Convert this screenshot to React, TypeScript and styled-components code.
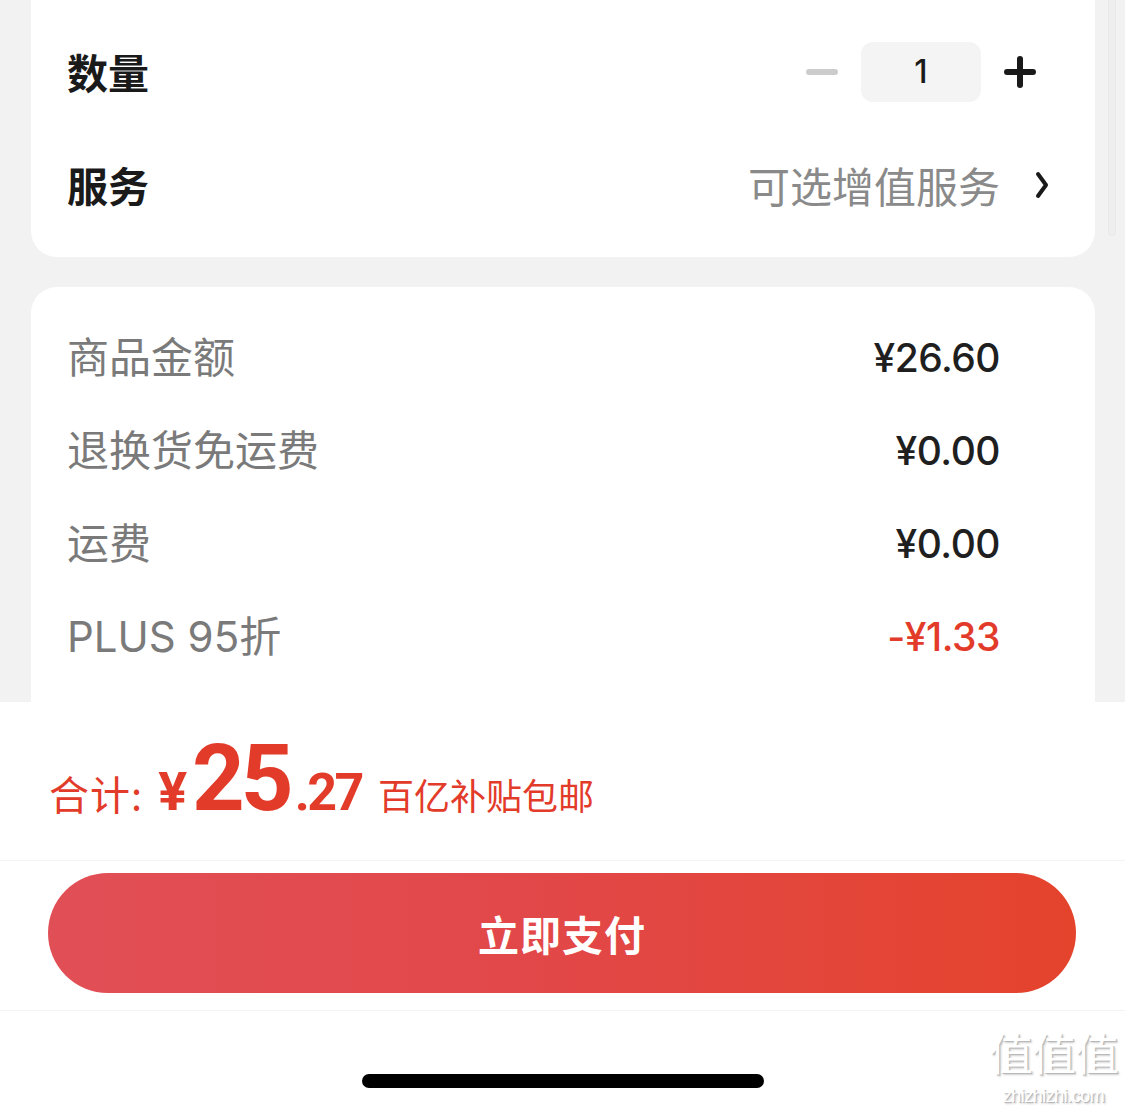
import React from "react";
import styled, { createGlobalStyle } from "styled-components";

const Global = createGlobalStyle`
  html, body { margin: 0; padding: 0; background: #ffffff; }
  body { font-family: Inter, "Noto Sans CJK SC", sans-serif; -webkit-font-smoothing: antialiased; }
  * { box-sizing: border-box; }
`;

const Page = styled.div`
  width: 1125px;
  height: 1114px;
  display: flex;
  flex-direction: column;
  position: relative;
  overflow: hidden;
  background: #ffffff;
`;

const Scroller = styled.div`
  height: 702px;
  flex-shrink: 0;
  background: #f2f2f2;
  overflow: hidden;
  position: relative;
  display: flex;
  flex-direction: column;
  gap: 30px;
  padding: 0 30px 0 31px;
`;

const ScrollThumb = styled.div`
  position: absolute;
  right: 9px;
  top: -10px;
  width: 8px;
  height: 246px;
  border-radius: 4px;
  background: #eeeeee;
  border: 1px solid #e9e9e9;
`;

const Card = styled.div<{ $top?: boolean }>`
  background: #ffffff;
  border-radius: ${(p) => (p.$top ? "0 0 26px 26px" : "26px")};
  padding: ${(p) => (p.$top ? "15px 36px 16px 36px" : "24px 95px 80px 36px")};
  display: flex;
  flex-direction: column;
  flex-shrink: 0;
`;

const OptionRow = styled.div`
  height: 113px;
  display: flex;
  align-items: center;
  justify-content: space-between;
`;

const BoldLabel = styled.div`
  font-family: "Noto Sans CJK SC", sans-serif;
  font-size: 41px;
  font-weight: 700;
  color: #1a1a1a;
  line-height: 1;
`;

const Stepper = styled.div`
  display: flex;
  align-items: center;
  gap: 23px;
  margin-right: 23px;
`;

const Bar = styled.span<{ $color: string; $vertical?: boolean }>`
  position: relative;
  display: block;
  width: 32px;
  height: 32px;
  &::before, &::after {
    content: "";
    position: absolute;
    left: 0;
    top: 13px;
    width: 32px;
    height: 6px;
    border-radius: 3px;
    background: ${(p) => p.$color};
  }
  &::after {
    display: ${(p) => (p.$vertical ? "block" : "none")};
    transform: rotate(90deg);
  }
`;

const QtyBox = styled.div`
  width: 120px;
  height: 60px;
  border-radius: 12px;
  background: #f4f4f4;
  display: flex;
  align-items: center;
  justify-content: center;
  font-family: Inter, sans-serif;
  font-size: 32px;
  font-weight: 500;
  color: #1a1a1a;
`;

const ServiceLink = styled.div`
  display: flex;
  align-items: center;
  gap: 34px;
  margin-right: 9px;
`;

const MutedText = styled.span`
  font-family: "Noto Sans CJK SC", sans-serif;
  font-size: 42px;
  color: #8a8a8a;
  line-height: 1;
`;

const PriceRow = styled.div`
  height: 93px;
  display: flex;
  align-items: center;
  justify-content: space-between;
`;

const PriceLabel = styled.span`
  font-family: Inter, "Noto Sans CJK SC", sans-serif;
  font-size: 42px;
  color: #7a7a7a;
  line-height: 1;
`;

const PriceValue = styled.span<{ $red?: boolean }>`
  font-family: Inter, sans-serif;
  font-size: 39px;
  font-weight: 500;
  color: ${(p) => (p.$red ? "#e33b2a" : "#1f1f1f")};
  letter-spacing: -0.5px;
  line-height: 1;
`;

const BottomBar = styled.div`
  flex: 1;
  background: #ffffff;
  display: flex;
  flex-direction: column;
`;

const TotalRow = styled.div`
  height: 159px;
  flex-shrink: 0;
  display: flex;
  align-items: baseline;
  padding: 31px 0 0 49px;
  border-bottom: 1px solid #f3f3f3;
  color: #e33b2a;
`;

const TotalLabel = styled.span`
  font-family: "Noto Sans CJK SC", sans-serif;
  font-size: 40px;
  letter-spacing: 1px;
  line-height: 1;
  margin-right: 15px;
`;

const Yen = styled.span`
  font-family: Roboto, sans-serif;
  font-weight: 700;
  font-size: 54px;
  line-height: 1;
  margin-right: 5px;
`;

const BigNum = styled.span`
  font-family: Roboto, sans-serif;
  font-weight: 700;
  font-size: 92px;
  letter-spacing: -4px;
  line-height: 1;
`;

const Cents = styled.span`
  font-family: Roboto, sans-serif;
  font-weight: 700;
  font-size: 52px;
  letter-spacing: -2.5px;
  line-height: 1;
  margin-left: 5px;
  margin-right: 16px;
`;

const Subsidy = styled.span`
  font-family: "Noto Sans CJK SC", sans-serif;
  font-size: 36px;
  line-height: 1;
`;

const ButtonArea = styled.div`
  height: 150px;
  flex-shrink: 0;
  padding: 12px 49px 0 48px;
  border-bottom: 1px solid #f3f3f3;
`;

const PayButton = styled.button`
  width: 100%;
  height: 120px;
  border: none;
  border-radius: 60px;
  background: linear-gradient(90deg, #e14f56 0%, #e2484a 45%, #e4432c 100%);
  color: #ffffff;
  font-family: "Noto Sans CJK SC", sans-serif;
  font-size: 41px;
  font-weight: 700;
  letter-spacing: 1px;
  display: flex;
  align-items: center;
  justify-content: center;
  padding: 0;
`;

const HomeArea = styled.div`
  flex: 1;
  display: flex;
  justify-content: center;
  padding-top: 63px;
`;

const HomeIndicator = styled.div`
  width: 402px;
  height: 14px;
  border-radius: 7px;
  background: #000000;
`;

const Watermark = styled.div`
  position: absolute;
  right: 7px;
  bottom: 8px;
  display: flex;
  flex-direction: column;
  align-items: center;
  gap: 11px;
  color: #ffffff;
  text-shadow: 1px 1px 0 #b9b9b9, 2px 2px 2px #cfcfcf;
`;

const WmChars = styled.div`
  font-family: "Noto Sans CJK SC", sans-serif;
  font-size: 44px;
  line-height: 46px;
  letter-spacing: -1px;
`;

const WmUrl = styled.div`
  font-family: "Liberation Sans", sans-serif;
  font-size: 18px;
  letter-spacing: -0.5px;
  line-height: 20px;
`;

function Chevron() {
  return (
    <svg width="16" height="30" viewBox="0 0 16 30" fill="none">
      <polyline
        points="4,4 12,15 4,26"
        stroke="#1a1a1a"
        strokeWidth="4"
        strokeLinecap="round"
        strokeLinejoin="round"
      />
    </svg>
  );
}

const prices = [
  { label: "商品金额", value: "¥26.60" },
  { label: "退换货免运费", value: "¥0.00" },
  { label: "运费", value: "¥0.00" },
  { label: "PLUS 95折", value: "-¥1.33", red: true },
];

export default function App() {
  return (
    <Page>
      <Global />
      <Scroller>
        <ScrollThumb />
        <Card $top>
          <OptionRow>
            <BoldLabel>数量</BoldLabel>
            <Stepper>
              <Bar $color="#cccccc" />
              <QtyBox>1</QtyBox>
              <Bar $color="#1a1a1a" $vertical />
            </Stepper>
          </OptionRow>
          <OptionRow>
            <BoldLabel>服务</BoldLabel>
            <ServiceLink>
              <MutedText>可选增值服务</MutedText>
              <Chevron />
            </ServiceLink>
          </OptionRow>
        </Card>
        <Card>
          {prices.map((p) => (
            <PriceRow key={p.label}>
              <PriceLabel>{p.label}</PriceLabel>
              <PriceValue $red={p.red}>{p.value}</PriceValue>
            </PriceRow>
          ))}
        </Card>
      </Scroller>
      <BottomBar>
        <TotalRow>
          <TotalLabel>合计:</TotalLabel>
          <Yen>¥</Yen>
          <BigNum>25</BigNum>
          <Cents>.27</Cents>
          <Subsidy>百亿补贴包邮</Subsidy>
        </TotalRow>
        <ButtonArea>
          <PayButton>立即支付</PayButton>
        </ButtonArea>
        <HomeArea>
          <HomeIndicator />
        </HomeArea>
      </BottomBar>
      <Watermark>
        <WmChars>值值值</WmChars>
        <WmUrl>zhizhizhi.com</WmUrl>
      </Watermark>
    </Page>
  );
}
